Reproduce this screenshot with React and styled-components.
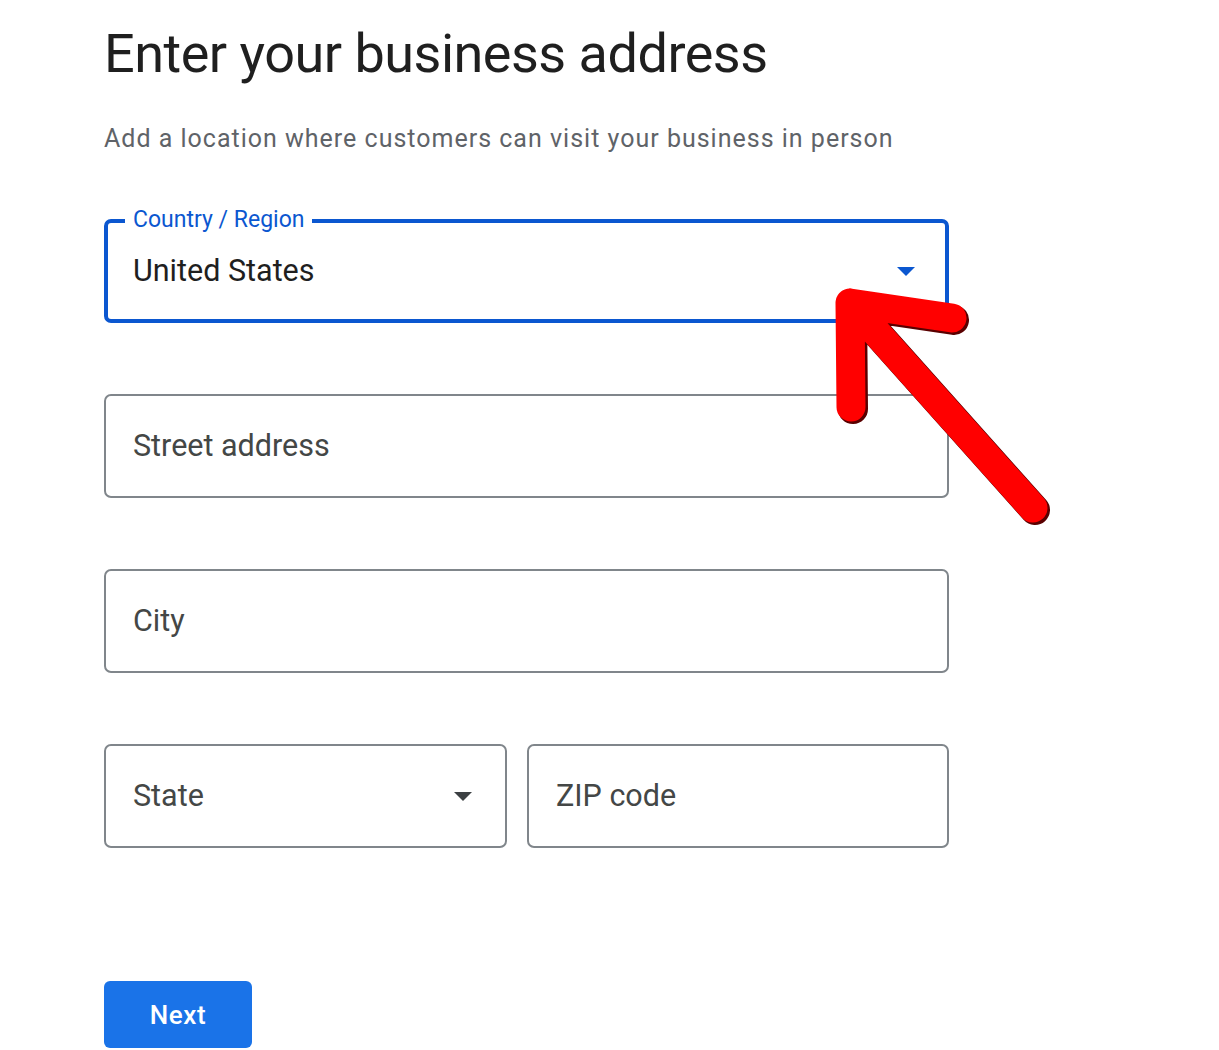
import React from "react";
import styled, { createGlobalStyle } from "styled-components";

const GlobalStyle = createGlobalStyle`
  html, body {
    margin: 0;
    padding: 0;
    background: #ffffff;
  }
  body {
    font-family: Roboto, "Liberation Sans", Arial, sans-serif;
  }
`;

const Page = styled.div`
  position: relative;
  width: 1219px;
  height: 1050px;
  overflow: hidden;
  padding: 22px 0 0 104px;
  box-sizing: border-box;
`;

const Title = styled.h1`
  margin: 0;
  font-size: 54px;
  font-weight: 400;
  line-height: 64px;
  color: #1f1f1f;
  letter-spacing: -0.5px;
`;

const Subtitle = styled.p`
  margin: 37px 0 0;
  font-size: 25px;
  line-height: 32px;
  color: #5f6368;
  letter-spacing: 1px;
`;

const Form = styled.form`
  width: 845px;
  margin-top: 64px;
  display: flex;
  flex-direction: column;
  gap: 71px;
`;

const Row = styled.div`
  display: flex;
  gap: 20px;
`;

const Field = styled.div`
  position: relative;
  flex: ${({ width }) => (width ? `0 0 ${width}px` : "1 1 auto")};
  height: 104px;
  box-sizing: border-box;
  display: flex;
  align-items: center;
  padding: ${({ focused }) => (focused ? "0 30px 0 25px" : "0 33px 0 27px")};
  border: ${({ focused }) => (focused ? "4px solid #0b57d0" : "2px solid #80868b")};
  border-radius: 7px;
`;

const FloatingLabel = styled.span`
  position: absolute;
  top: -17px;
  left: 17px;
  padding: 0 8px;
  background: #ffffff;
  font-size: 23px;
  line-height: 28px;
  color: #0b57d0;
`;

const Value = styled.span`
  flex: 1;
  font-size: 30.5px;
  line-height: 36px;
  margin-top: -1px;
  color: ${({ placeholder }) => (placeholder ? "#444746" : "#1f1f1f")};
`;

const Caret = styled.span`
  width: 0;
  height: 0;
  border-left: 9px solid transparent;
  border-right: 9px solid transparent;
  border-top: 9px solid ${({ color }) => color};
`;

const NextButton = styled.button`
  display: block;
  margin-top: 133px;
  width: 148px;
  height: 67px;
  border: none;
  border-radius: 6px;
  background: #1a73e8;
  color: #ffffff;
  font-family: Roboto, "Liberation Sans", Arial, sans-serif;
  font-size: 26px;
  font-weight: 500;
  letter-spacing: 0.6px;
  cursor: pointer;
`;

const ArrowOverlay = styled.svg`
  position: absolute;
  left: 0;
  top: 0;
  pointer-events: none;
`;

function PointerArrow() {
  const path = "M952 318 L850 303 L851 407 M850 303 L1033 508";
  return (
    <ArrowOverlay width="1219" height="1050" viewBox="0 0 1219 1050">
      <path
        d={path}
        transform="translate(2 2)"
        fill="none"
        stroke="#5a0000"
        strokeWidth="30"
        strokeLinecap="round"
        strokeLinejoin="round"
      />
      <path
        d={path}
        fill="none"
        stroke="#ff0000"
        strokeWidth="29"
        strokeLinecap="round"
        strokeLinejoin="round"
      />
    </ArrowOverlay>
  );
}

export default function App() {
  return (
    <>
      <GlobalStyle />
      <Page>
        <Title>Enter your business address</Title>
        <Subtitle>Add a location where customers can visit your business in person</Subtitle>
        <Form onSubmit={(e) => e.preventDefault()}>
          <Field focused>
            <FloatingLabel>Country / Region</FloatingLabel>
            <Value>United States</Value>
            <Caret color="#0b57d0" />
          </Field>
          <Field>
            <Value placeholder>Street address</Value>
          </Field>
          <Field>
            <Value placeholder>City</Value>
          </Field>
          <Row>
            <Field width={403}>
              <Value placeholder>State</Value>
              <Caret color="#3c4043" />
            </Field>
            <Field>
              <Value placeholder>ZIP code</Value>
            </Field>
          </Row>
        </Form>
        <NextButton type="button">Next</NextButton>
        <PointerArrow />
      </Page>
    </>
  );
}
